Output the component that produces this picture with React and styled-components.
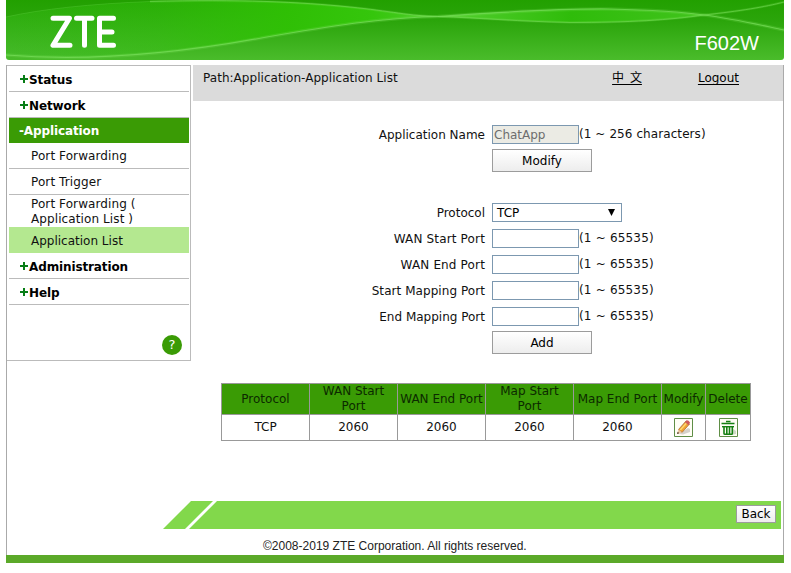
import React from "react";
import styled, { createGlobalStyle, css } from "styled-components";

const GlobalStyle = createGlobalStyle`
  * { box-sizing: border-box; }
  body {
    margin: 0;
    background: #fff;
    color: #111;
    font-family: "DejaVu Sans", Verdana, sans-serif;
    font-size: 12px;
    line-height: 15px;
    overflow: hidden;
  }
  input, select, button { font: inherit; letter-spacing: inherit; color: inherit; }
`;

const Text = styled.span`
  white-space: nowrap;
  letter-spacing: ${(p) => p.$ls || 0}px;
`;

const Page = styled.div`
  width: 778px;
  height: 573px;
  margin-left: 6px;
`;

const Header = styled.header`
  position: relative;
  height: 60px;
  overflow: hidden;
  border-radius: 0 0 3px 3px;
  display: flex;
  justify-content: flex-end;
  align-items: flex-end;
  padding: 0 25px 5px 0;
`;

const HeaderArt = styled.svg`
  position: absolute;
  inset: 0;
`;

const Model = styled.span`
  position: relative;
  color: #fff;
  font: 20px/24px "Liberation Sans", Arial, sans-serif;
`;

const Frame = styled.div`
  display: flex;
  flex-direction: column;
  height: 490px;
  margin-top: 5px;
  border: solid #aaa;
  border-width: 0 1px;
`;

const Columns = styled.div`
  display: flex;
  gap: 2px;
  height: 436px;
`;

const Sidebar = styled.nav`
  width: 184px;
  height: 296px;
  border: 1px solid #bbb;
  border-left: 0;
  padding: 0 1px 0 2px;
`;

const NavItem = styled.div`
  display: flex;
  align-items: center;
  height: 26px;
  padding: 3px 0 0 10px;
  border-bottom: 1px solid #bbb;
  font-weight: bold;
  color: #000;
  letter-spacing: -0.12px;
  ${(p) => p.$active && css`
    height: 25px;
    padding-top: 2px;
    background: #3a9b05;
    color: #fff;
    border: 0;
  `}
`;

const Plus = styled.svg`
  width: 10px;
  height: 18px;
`;

const SubItem = styled.div`
  height: 26px;
  padding: 6px 40px 0 22px;
  border-bottom: 1px solid #bbb;
  letter-spacing: 0.1px;
  ${(p) => p.$tall && css`
    height: 32px;
    padding-top: 2px;
    border: 0;
  `}
  ${(p) => p.$current && css`
    padding-top: 7px;
    background: #b4e890;
    border: 0;
    letter-spacing: 0;
  `}
`;

const HelpButton = styled.div`
  width: 20px;
  height: 20px;
  margin: 30px 7px 0 auto;
  border-radius: 50%;
  background: #3a9b05;
  color: #fff;
  text-align: center;
  line-height: 20px;
  font-size: 13px;
`;

const Main = styled.main`
  width: 590px;
`;

const PathBar = styled.div`
  display: flex;
  height: 36px;
  padding: 6px 44px 0 10px;
  background: #dbdbdb;
`;

const TopLink = styled.a`
  margin-left: ${(p) => (p.$push ? "auto" : "56px")};
  color: #000;
  text-decoration: underline;
  text-underline-offset: 2px;
  white-space: nowrap;
  word-spacing: ${(p) => (p.$push ? 2 : 0)}px;
  font-family: "DejaVu Sans", "Noto Sans CJK SC", sans-serif;
`;

const Form = styled.div`
  display: grid;
  grid-template-columns: 292px 1fr;
  grid-auto-rows: 26px;
  column-gap: 7px;
  margin-top: ${(p) => p.$top}px;
`;

const Label = styled.label`
  justify-self: end;
  padding-top: 6px;
  white-space: nowrap;
  letter-spacing: ${(p) => p.$ls || 0}px;
`;

const Field = styled.div`
  display: flex;
  padding-top: 3px;
`;

const Hint = styled(Text)`
  padding-top: 2px;
  letter-spacing: ${(p) => p.$ls || 0.18}px;
`;

const Input = styled.input`
  width: 87px;
  height: 19px;
  padding: 0 0 0 1px;
  border: 1px solid #7c98b0;
  border-radius: 0;
  background: #fff;
  &:disabled { background: #ebebe4; color: #6d6d6d; }
`;

const Select = styled.div`
  display: flex;
  justify-content: space-between;
  width: 130px;
  height: 19px;
  padding: 2px 6px 0 4px;
  border: 1px solid #7c98b0;
  color: #000;
`;

const Arrow = styled.svg`
  margin: 3px 0 0;
`;

const Button = styled.button`
  width: ${(p) => p.$w || 100}px;
  height: ${(p) => p.$h || 23}px;
  padding: ${(p) => (p.$w ? 0 : 1)}px 0 0;
  margin-top: ${(p) => p.$mt || 0}px;
  border: 1px solid #9c9c9c;
  border-radius: 0;
  background: linear-gradient(#fff, #ededed);
  color: #000;
`;

const Table = styled.div`
  display: grid;
  grid-template-columns: repeat(5, 87px) 43px 44px;
  grid-template-rows: 30px 25px;
  gap: 1px;
  width: 530px;
  margin: 27px 0 0 28px;
  padding: 1px;
  background: #999;
`;

const Cell = styled.div`
  display: flex;
  align-items: center;
  justify-content: center;
  text-align: center;
  padding: 0 ${(p) => (p.$wrap ? 8 : 0)}px;
  background: ${(p) => (p.$head ? "#3a9b05" : "#fff")};
  color: ${(p) => (p.$head ? "#0c2a00" : "#111")};
`;

const Footer = styled.footer`
  position: relative;
  display: flex;
  justify-content: flex-end;
  align-items: center;
  height: 28px;
  width: 618px;
  margin-left: 156px;
  padding: 0 5px 2px 0;
`;

const FooterArt = styled.svg`
  position: absolute;
  inset: 0;
`;

const BackButton = styled(Button)`
  position: relative;
`;

const Copyright = styled.div`
  height: 26px;
  padding-left: 256px;
  font: 12px/34px "Liberation Sans", Arial, sans-serif;
  white-space: nowrap;
  color: #222;
`;

const BottomBar = styled.div`
  height: 8px;
  background: #5ba929;
`;

const LOWER_WAVE = "M6 55C90 62 180 53 264 37.500C330 26 380 18 438 16.500C500 12 560 8.500 610 9C650 10 690 13 704 15C735 19 760 25 784 30";
const UPPER_WAVE = "M150 1.500C240 -1 300 2 350 7C390 11 410 16 438 16.500C480 18 520 21.500 570 22.500C630 22.500 670 20 704 15C740 11 765 7 784 2";

function HeaderBackground() {
  return (
    <HeaderArt width="778" height="60" viewBox="6 0 778 60">
      <defs>
        <linearGradient id="base" x1="0" y1="0" x2="0" y2="1">
          <stop offset="0" stopColor="#22a000" />
          <stop offset="0.35" stopColor="#2ba50b" />
          <stop offset="1" stopColor="#4abc2b" />
        </linearGradient>
        <linearGradient id="left" x1="0" y1="0" x2="0" y2="1">
          <stop offset="0" stopColor="#27a906" />
          <stop offset="1" stopColor="#45ba29" />
        </linearGradient>
        <linearGradient id="bright" x1="0" y1="0" x2="1" y2="0">
          <stop offset="0" stopColor="#2fc104" stopOpacity="0" />
          <stop offset="0.35" stopColor="#2fc104" stopOpacity="0.25" />
          <stop offset="0.65" stopColor="#2fc104" stopOpacity="0.9" />
          <stop offset="0.85" stopColor="#35c60c" />
          <stop offset="1" stopColor="#50cc2c" />
        </linearGradient>
        <linearGradient id="lens" x1="0" y1="0" x2="1" y2="0">
          <stop offset="0" stopColor="#55d031" />
          <stop offset="0.5" stopColor="#2fbc0a" />
          <stop offset="1" stopColor="#41c31d" />
        </linearGradient>
      </defs>
      <rect x="6" width="778" height="60" fill="url(#base)" />
      <g>
        <path id="wing" d="M6 17Q60 5 150 1.500C240 -1 300 2 350 7C390 11 410 16 438 16.500C380 18 330 26 264 37.500C180 53 90 62 6 55Z" fill="url(#left)" />
        <path d="M6 17Q60 5 150 1.500C240 -1 300 2 350 7C390 11 410 16 438 16.500C380 18 330 26 264 37.500C180 53 90 62 6 55Z" fill="url(#bright)" />
      </g>
      <path d="M438 16.500C500 12 560 8.500 610 9C650 10 690 13 704 15C670 20 630 22.500 570 22.500C520 21.500 480 18 438 16.500Z" fill="url(#lens)" />
      <g fill="none" stroke="#7be05c">
        <path d={LOWER_WAVE} strokeWidth="3.500" opacity="0.22" />
        <path d={LOWER_WAVE} strokeWidth="1.200" opacity="0.7" />
        <path d={UPPER_WAVE} strokeWidth="2.500" opacity="0.2" />
        <path d={UPPER_WAVE} strokeWidth="1" opacity="0.55" />
        <path d="M6 17Q60 5 150 1.500" strokeWidth="0.800" opacity="0.3" />
      </g>
      <g fill="none" stroke="#fff" strokeWidth="5" strokeLinecap="round" strokeLinejoin="round">
        <path d="M53 18.300H69.500L53 45.300H70" />
        <path d="M76.500 18.300H92M84.500 18.300V45.300" />
        <path d="M113.500 18.300H99.500V45.300H113.500M99.500 32H112" />
      </g>
    </HeaderArt>
  );
}

function PlusSign() {
  return (
    <Plus viewBox="0 0 10 18">
      <path d="M1 8H9M5 4V12" stroke="#087d16" strokeWidth="2" />
    </Plus>
  );
}

function PencilIcon() {
  return (
    <svg width="19" height="19" viewBox="0 0 19 19">
      <path d="M.5 .5H18.500V18.500H.5Z" fill="#fffef5" stroke="#5f8e46" />
      <path d="M5 16L14 10L16 11V14L9 16.500Z" fill="#d5d2cb" />
      <path d="M4.500 11.500L12 3L15.500 6L8 14.500Z" fill="#f0a431" stroke="#a1602c" strokeWidth=".7" />
      <path d="M6.300 12L13 4.500" stroke="#ffdb72" strokeWidth="1.300" />
      <path d="M11 4.200L12.500 2.300Q14.500 2 16 4.500L14.500 7.200Z" fill="#cf5a5a" />
      <path d="M3 16L4.500 11.500L8 14.500Z" fill="#ecc8a0" />
      <path d="M3 16L3.700 13.800L5.300 15.200Z" fill="#442c20" />
    </svg>
  );
}

function TrashIcon() {
  return (
    <svg width="19" height="19" viewBox="0 0 19 19">
      <path d="M.5 .5H18.500V18.500H.5Z" fill="#fffef5" stroke="#5f8e46" />
      <path d="M13 10L17 13V16L13 17Z" fill="#cfdac6" />
      <path d="M2.500 5.500H15.500M7 3.500H11.500" stroke="#168012" strokeWidth="1.600" />
      <path d="M3 8.700H15" stroke="#168012" strokeWidth="1.400" />
      <path d="M5 8.700V15.500Q5 16.300 6 16.300H12.500Q13.300 16.300 13.300 15.500V8.700M7.800 9V16M10.500 9V16" fill="none" stroke="#168012" strokeWidth="1.600" />
    </svg>
  );
}

const ports = [
  ["WAN Start Port", 0.15],
  ["WAN End Port", 0.15],
  ["Start Mapping Port", 0.06],
  ["End Mapping Port", 0],
];

const headings = ["Protocol", "WAN Start Port", "WAN End Port", "Map Start Port", "Map End Port", "Modify", "Delete"];

export default function App() {
  return (
    <>
      <GlobalStyle />
      <Page>
        <Header>
          <HeaderBackground />
          <Model>F602W</Model>
        </Header>
        <Frame>
          <Columns>
            <Sidebar>
              <NavItem><PlusSign />Status</NavItem>
              <NavItem><PlusSign />Network</NavItem>
              <NavItem $active>-Application</NavItem>
              <SubItem>Port Forwarding</SubItem>
              <SubItem>Port Trigger</SubItem>
              <SubItem $tall>Port Forwarding (<br />Application List )</SubItem>
              <SubItem $current>Application List</SubItem>
              <NavItem><PlusSign />Administration</NavItem>
              <NavItem><PlusSign />Help</NavItem>
              <HelpButton>?</HelpButton>
            </Sidebar>
            <Main>
              <PathBar>
                <Text $ls={0.04}>Path:Application-Application List</Text>
                <TopLink $push>中 文</TopLink>
                <TopLink>Logout</TopLink>
              </PathBar>
              <Form $top={21}>
                <Label>Application Name</Label>
                <Field><Input disabled defaultValue="ChatApp" /><Hint $ls={0.08}>(1 ~ 256 characters)</Hint></Field>
                <span />
                <div><Button $mt={1}>Modify</Button></div>
              </Form>
              <Form $top={26}>
                <Label>Protocol</Label>
                <Field>
                  <Select>TCP<Arrow width="7" height="8"><path d="M0 0H7L3.500 7Z" /></Arrow></Select>
                </Field>
                {ports.map(([name, spacing]) => (
                  <React.Fragment key={name}>
                    <Label $ls={spacing}>{name}</Label>
                    <Field><Input /><Hint>(1 ~ 65535)</Hint></Field>
                  </React.Fragment>
                ))}
                <span />
                <div><Button $mt={1}>Add</Button></div>
              </Form>
              <Table>
                {headings.map((h) => <Cell $head $wrap={h.includes("Start")} key={h}>{h}</Cell>)}
                <Cell>TCP</Cell>
                <Cell>2060</Cell>
                <Cell>2060</Cell>
                <Cell>2060</Cell>
                <Cell>2060</Cell>
                <Cell><PencilIcon /></Cell>
                <Cell><TrashIcon /></Cell>
              </Table>
            </Main>
          </Columns>
          <Footer>
            <FooterArt width="618" height="28">
              <path d="M0 28L28 0H50L22 28ZM26 28L54 0H618V28Z" fill="#82d84b" />
            </FooterArt>
            <BackButton $w={40} $h={18}>Back</BackButton>
          </Footer>
          <Copyright>©2008-2019 ZTE Corporation. All rights reserved.</Copyright>
        </Frame>
        <BottomBar />
      </Page>
    </>
  );
}
